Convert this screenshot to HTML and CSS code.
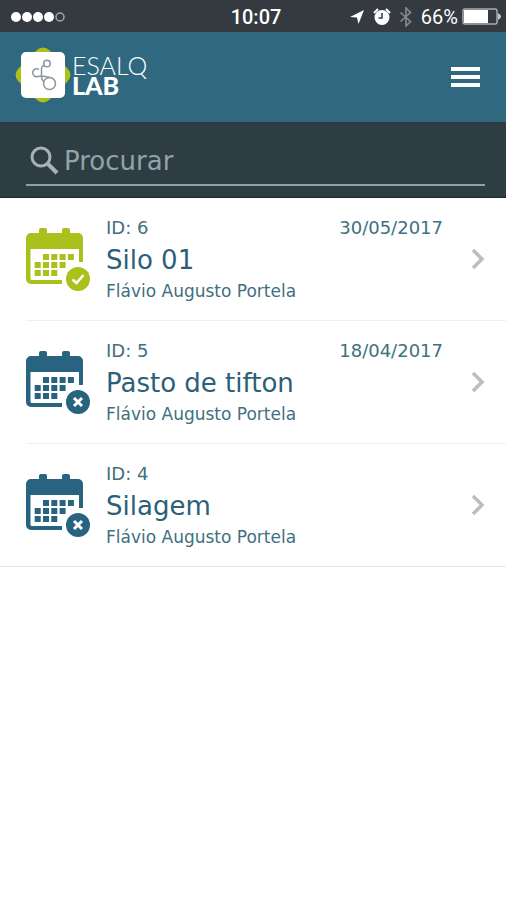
FILE: index.html
```html
<!DOCTYPE html>
<html lang="pt-BR">
<head>
    <meta charset="UTF-8">
    <meta name="viewport" content="width=device-width, initial-scale=1.0">
    <title>ESALQ LAB</title>
    <link rel="stylesheet" href="styles.css">
</head>
<body>
    <!-- Shared icons -->
    <svg class="sprite" aria-hidden="true">
        <symbol id="calendar" viewBox="0 0 64 64">
            <path d="M13 6V3a2 2 0 0 1 2-2h4a2 2 0 0 1 2 2v3h15V3a2 2 0 0 1 2-2h4a2 2 0 0 1 2 2v3h8a5 5 0 0 1 5 5v24h-4V22H4.500v29.500q0 1.500 1.500 1.500h30v4H5a5 5 0 0 1-5-5V11a5 5 0 0 1 5-5z"/>
            <path d="M17 27h6v6h-6zM25.300 27h6v6h-6zM33.600 27h6v6h-6zM41.900 27h6v6h-6zM8.700 35h6v6h-6zM17 35h6v6h-6zM25.300 35h6v6h-6zM33.600 35h6v6h-6zM8.700 43h6v6h-6zM17 43h6v6h-6zM25.300 43h6v6h-6z"/>
            <circle cx="52" cy="52" r="12"/>
        </symbol>
        <symbol id="chevron" viewBox="0 0 14 22">
            <path d="M2 2l9 9-9 9" fill="none" stroke="currentColor" stroke-width="3.500"/>
        </symbol>
    </svg>

    <div class="status-bar">
        <svg class="signal" viewBox="0 0 56 12" width="56" height="12">
            <circle cx="6" cy="6" r="5"/>
            <circle cx="17" cy="6" r="5"/>
            <circle cx="28" cy="6" r="5"/>
            <circle cx="39" cy="6" r="5"/>
            <circle cx="50" cy="6" r="4" fill="none" stroke="#a4a8ab" stroke-width="1.500"/>
        </svg>
        <span class="time">10:07</span>
        <div class="status-icons">
            <svg viewBox="0 0 16 16" width="16" height="16">
                <path d="M15 1L9.500 15 8 8.500 1 8z"/>
            </svg>
            <svg viewBox="0 0 18 18" width="18" height="18">
                <circle cx="9" cy="9.500" r="7.500"/>
                <path d="M1 5l4-4M17 5l-4-4" stroke="#fff" stroke-width="2"/>
                <path d="M9 5v5H5.500" fill="none" stroke="#343a40" stroke-width="1.500"/>
            </svg>
            <svg viewBox="0 0 14 20" width="14" height="20">
                <path d="M1.500 5.500l10 9L7 19V1l4.500 4.500-10 9" fill="none" stroke="#858a8e" stroke-width="1.600"/>
            </svg>
            <span class="battery-level">66%</span>
            <svg viewBox="0 0 40 18" width="40" height="18">
                <rect x="1" y="1" width="34" height="15" rx="2" fill="none" stroke="#a9adb0" stroke-width="1.500"/>
                <rect x="2" y="2" width="24" height="13"/>
                <path d="M36 5q6 3.500 0 7z" fill="#c8cbcd"/>
            </svg>
        </div>
    </div>

    <header>
        <a class="logo" href="#" aria-label="ESALQ LAB">
            <svg viewBox="0 0 58 58" width="58" height="58">
                <rect x="7" y="7" width="44" height="44" rx="9" fill="#a9c11a" transform="rotate(45 29 29)"/>
                <rect x="7" y="6" width="44" height="46" rx="5" fill="#fff"/>
                <g fill="none" stroke="#8b959b" stroke-width="1.500">
                    <circle cx="33" cy="17.500" r="3.300"/>
                    <circle cx="35.500" cy="37.500" r="6"/>
                    <path d="M25 23.500a4 4 0 1 0-1 7q5-1.500 11.500 1M31 20q-3.500-1-3.500 3v8q0 3 2.500 5"/>
                </g>
            </svg>
            <span class="logo-text">
                <span class="logo-top">ESALQ</span>
                <span class="logo-bottom">LAB</span>
            </span>
        </a>
        <button class="menu" type="button" aria-label="Menu">
            <span></span>
            <span></span>
            <span></span>
        </button>
    </header>

    <form class="search" role="search">
        <div class="search-field">
            <label for="search">
                <svg viewBox="0 0 30 30" width="30" height="30" role="img" aria-label="Procurar">
                    <circle cx="11" cy="11" r="9" fill="none" stroke="#a7b3b8" stroke-width="3"/>
                    <path d="M17 17l10 10" stroke="#a7b3b8" stroke-width="4"/>
                </svg>
            </label>
            <input type="text" id="search" placeholder="Procurar">
        </div>
    </form>

    <main>
        <ul class="samples">
            <li>
                <a class="sample done" href="#">
                    <svg class="calendar" viewBox="0 0 64 64">
                        <use href="#calendar"/>
                        <path d="M46.500 52.500l4 3.500 7-8" fill="none" stroke="#fff" stroke-width="2.500"/>
                    </svg>
                    <div class="info">
                        <div class="meta">
                            <span>ID: 6</span>
                            <time datetime="2017-05-30">30/05/2017</time>
                        </div>
                        <h2>Silo 01</h2>
                        <p>Flávio Augusto Portela</p>
                    </div>
                    <svg class="chevron"><use href="#chevron"/></svg>
                </a>
            </li>
            <li>
                <a class="sample" href="#">
                    <svg class="calendar" viewBox="0 0 64 64">
                        <use href="#calendar"/>
                        <path d="M48 48l8 8M56 48l-8 8" stroke="#fff" stroke-width="3"/>
                    </svg>
                    <div class="info">
                        <div class="meta">
                            <span>ID: 5</span>
                            <time datetime="2017-04-18">18/04/2017</time>
                        </div>
                        <h2>Pasto de tifton</h2>
                        <p>Flávio Augusto Portela</p>
                    </div>
                    <svg class="chevron"><use href="#chevron"/></svg>
                </a>
            </li>
            <li>
                <a class="sample" href="#">
                    <svg class="calendar" viewBox="0 0 64 64">
                        <use href="#calendar"/>
                        <path d="M48 48l8 8M56 48l-8 8" stroke="#fff" stroke-width="3"/>
                    </svg>
                    <div class="info">
                        <div class="meta">
                            <span>ID: 4</span>
                        </div>
                        <h2>Silagem</h2>
                        <p>Flávio Augusto Portela</p>
                    </div>
                    <svg class="chevron"><use href="#chevron"/></svg>
                </a>
            </li>
        </ul>
    </main>
</body>
</html>
```
FILE: styles.css
```css
/* Global Styles */
* {
    box-sizing: border-box;
}

body {
    font-family: Verdana, 'DejaVu Sans', sans-serif;
    margin: 0;
    background-color: #fff;
    color: #2c6078;
}

svg {
    display: block;
    flex-shrink: 0;
}

.sprite {
    position: absolute;
    width: 0;
    height: 0;
}

/* Status Bar */
.status-bar {
    display: grid;
    grid-template-columns: 1fr auto 1fr;
    align-items: center;
    height: 32px;
    padding: 2px 4px 0 10px;
    background-color: #343a40;
    color: #fff;
    fill: #fff;
    font-family: Roboto, sans-serif;
    font-size: 20px;
}

.time {
    font-weight: 500;
}

.status-icons {
    display: flex;
    justify-content: flex-end;
    align-items: center;
    gap: 8px;
}

.battery-level {
    margin-right: -4px;
}

/* Header */
header {
    display: flex;
    justify-content: space-between;
    align-items: center;
    height: 90px;
    padding: 0 26px 0 14px;
    background-color: #2f687f;
}

.logo {
    display: flex;
    align-items: center;
    color: #fff;
    text-decoration: none;
    margin-bottom: 4px;
}

.logo-text {
    display: flex;
    flex-direction: column;
    font-family: Lato, sans-serif;
    font-size: 25px;
    line-height: 20px;
}

.logo-top {
    font-weight: 300;
}

.logo-bottom {
    font-weight: 900;
}

.menu {
    display: flex;
    flex-direction: column;
    gap: 4px;
    padding: 0;
    border: none;
    background: none;
    cursor: pointer;
}

.menu span {
    width: 29px;
    height: 4px;
    background-color: #fff;
}

/* Search */
.search {
    padding: 16px 21px 11px 26px;
    background-color: #2e3c43;
    border-bottom: 1px solid #17282d;
}

.search-field {
    display: flex;
    align-items: center;
    height: 48px;
    padding-left: 4px;
    border-bottom: 2px solid #8fa0a6;
}

.search input {
    flex: 1;
    min-width: 0;
    padding: 0 4px;
    border: none;
    outline: none;
    background: none;
    color: #a7b3b8;
    font-family: inherit;
    font-size: 26px;
}

.search input::placeholder {
    color: #94a3a9;
    opacity: 1;
}

/* Sample List */
.samples {
    list-style: none;
    margin: 0;
    padding: 0;
}

.samples li {
    padding-left: 26px;
}

.samples li:last-child {
    padding-left: 0;
    border-bottom: 1px solid #e4e6e7;
}

.samples li:last-child .sample {
    padding-left: 26px;
    border-bottom: none;
}

.sample {
    display: flex;
    align-items: center;
    padding: 16px 21px 16px 0;
    border-bottom: 1px solid #eff0f0;
    color: #2c6078;
    text-decoration: none;
}

.calendar {
    width: 64px;
    height: 64px;
    fill: #286480;
}

.done .calendar {
    fill: #a9c11a;
}

.info {
    flex: 1;
    padding: 0 28px 0 16px;
}

.meta {
    display: flex;
    justify-content: space-between;
    font-size: 18px;
    line-height: 28px;
}

.sample h2 {
    margin: 0;
    font-size: 26px;
    font-weight: normal;
    line-height: 36px;
}

.sample p {
    margin: 0;
    font-size: 17px;
    line-height: 26px;
}

.meta,
.sample p {
    color: #41707f;
}

.chevron {
    width: 14px;
    height: 22px;
    color: #bdbdbd;
}
```
